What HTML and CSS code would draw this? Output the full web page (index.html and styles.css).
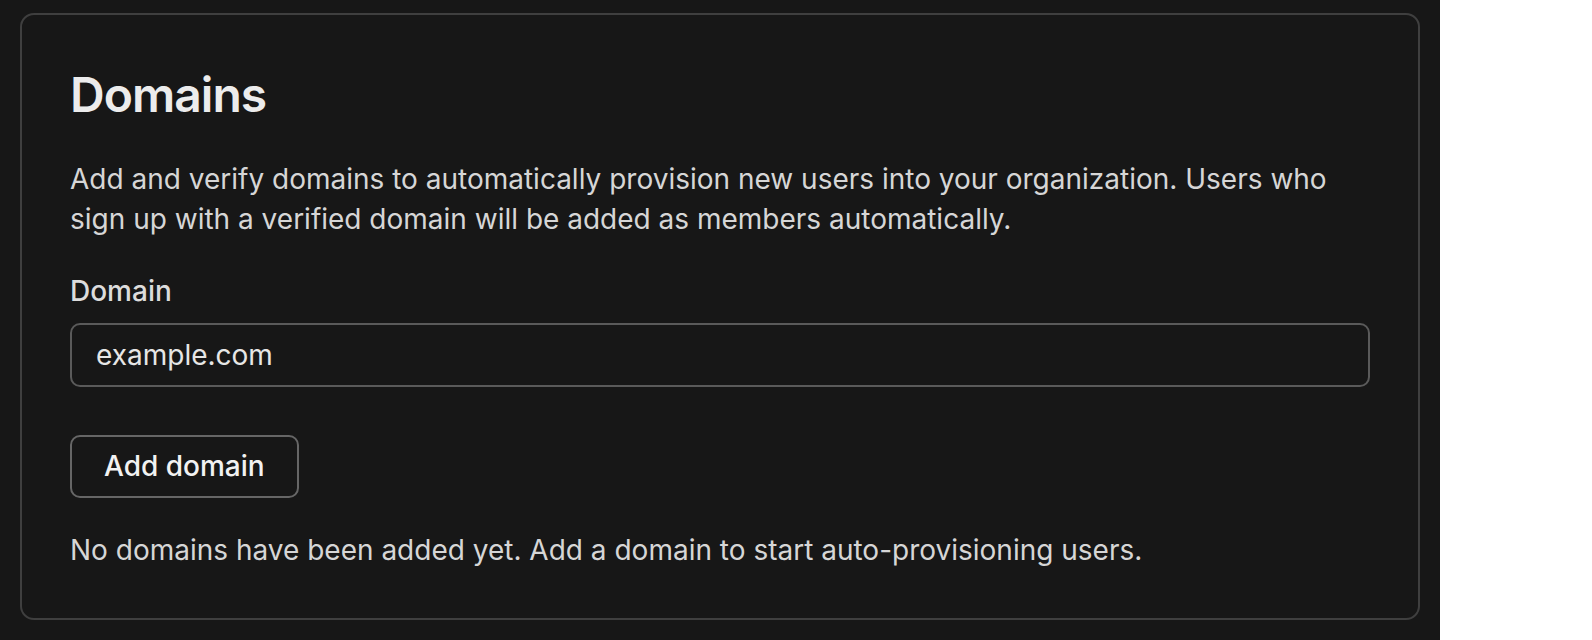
FILE: index.html
```html
<!DOCTYPE html>
<html lang="en">
<head>
<meta charset="utf-8">
<title>Domains</title>
<link rel="stylesheet" href="styles.css">
</head>
<body>
<div class="page">
  <section class="card">
    <h1 class="title">Domains</h1>
    <p class="desc">Add and verify domains to automatically provision new users into your organization. Users who sign up with a verified domain will be added as members automatically.</p>
    <label class="label" for="domain">Domain</label>
    <input class="input" id="domain" type="text" placeholder="example.com">
    <button class="btn" type="button">Add domain</button>
    <p class="empty">No domains have been added yet. Add a domain to start auto-provisioning users.</p>
  </section>
</div>
</body>
</html>
```

FILE: styles.css
```css
html, body {
  margin: 0;
  padding: 0;
  background: #ffffff;
}

.page {
  width: 1440px;
  height: 640px;
  box-sizing: border-box;
  background: #171717;
  padding: 13px 20px 20px 20px;
  font-family: Inter, "Noto Sans", sans-serif;
}

.card {
  box-sizing: border-box;
  height: 607px;
  border: 2px solid #3f3f3f;
  border-radius: 14px;
  padding: 51px 48px 48px 48px;
  display: flex;
  flex-direction: column;
  align-items: flex-start;
}

.title {
  margin: 0;
  font-size: 48px;
  line-height: 58px;
  font-weight: 600;
  color: #ececec;
  letter-spacing: -0.96px;
}

.desc {
  margin: 35px 0 0 0;
  font-size: 28px;
  line-height: 40px;
  color: #d6d6d6;
  font-weight: 400;
}

.label {
  margin-top: 32px;
  font-size: 28px;
  line-height: 40px;
  font-weight: 500;
  color: #dcdcdc;
}

.input {
  margin-top: 12px;
  box-sizing: border-box;
  width: 100%;
  height: 64px;
  border: 2px solid #5a5a5a;
  border-radius: 10px;
  background: #171717;
  padding: 0 24px;
  font-family: inherit;
  font-size: 28px;
  color: #e6e6e6;
  outline: none;
}

.input::placeholder {
  color: #e6e6e6;
  opacity: 1;
}

.btn {
  margin-top: 48px;
  box-sizing: border-box;
  height: 64px;
  padding: 0 32px;
  border: 2px solid #666666;
  border-radius: 10px;
  background: #171717;
  font-family: inherit;
  font-size: 28px;
  font-weight: 500;
  color: #f2f2f2;
}

.empty {
  margin: 32px 0 0 0;
  font-size: 28px;
  line-height: 40px;
  color: #d6d6d6;
}
```
